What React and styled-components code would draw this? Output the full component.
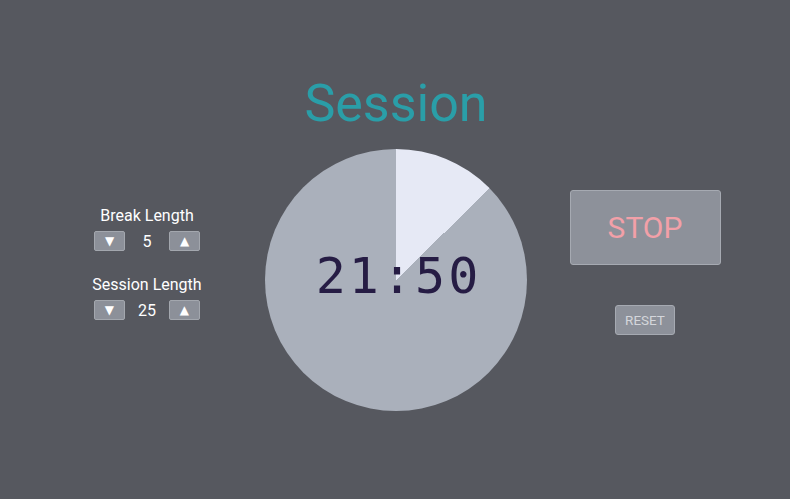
import React from 'react'
import styled, { createGlobalStyle } from 'styled-components'

const GlobalStyle = createGlobalStyle`
  body {
    margin: 0;
    background: #56585f;
    font-family: Roboto, "Liberation Sans", sans-serif;
  }
`

const Page = styled.div`
  width: 790px;
  height: 499px;
  display: flex;
  flex-direction: column;
  align-items: center;
  padding-top: 74px;
  box-sizing: border-box;
`

const Title = styled.h1`
  margin: 0;
  font-weight: 400;
  font-size: 52px;
  line-height: 60px;
  color: #2a9ea8;
  margin-left: 2px;
`

const Main = styled.div`
  display: grid;
  grid-template-columns: 236px 262px 236px;
  margin-top: 15px;
  margin-left: 2px;
`

const Controls = styled.div`
  display: flex;
  flex-direction: column;
  align-items: center;
  padding-top: 58px;
  gap: 25px;
`

const Control = styled.div`
  display: flex;
  flex-direction: column;
  align-items: center;
  gap: 6px;
`

const Label = styled.div`
  font-size: 16px;
  line-height: 18px;
  color: #ffffff;
`

const Row = styled.div`
  display: flex;
  align-items: center;
`

const Arrow = styled.button`
  width: 31px;
  height: 20px;
  padding: 0;
  display: flex;
  align-items: center;
  justify-content: center;
  background: #8c9099;
  border: 1px solid #a3a7ae;
  border-radius: 2px;
  color: #ffffff;
  font-family: "DejaVu Sans", sans-serif;
  font-size: 12px;
  line-height: 1;
`

const Value = styled.span`
  width: 44px;
  text-align: center;
  font-size: 16px;
  color: #ffffff;
`

const Pie = styled.div`
  width: 262px;
  height: 262px;
  border-radius: 50%;
  background: conic-gradient(#e6e9f5 0deg ${p => p.$deg}deg, #aab0bb ${p => p.$deg}deg 360deg);
  display: flex;
  align-items: center;
  justify-content: center;
`

const Time = styled.div`
  font-family: "DejaVu Sans Mono", "Liberation Mono", monospace;
  font-size: 50px;
  letter-spacing: 3px;
  color: #261c44;
  margin: -8px 0 0 5px;
`

const Actions = styled.div`
  display: flex;
  flex-direction: column;
  align-items: center;
  padding-top: 41px;
  gap: 40px;
`

const StopButton = styled.button`
  width: 151px;
  height: 75px;
  background: #8d919a;
  border: 1px solid #a6aab2;
  border-radius: 3px;
  color: #f2a0a8;
  font-family: Roboto, "Liberation Sans", sans-serif;
  font-size: 30px;
`

const ResetButton = styled.button`
  width: 60px;
  height: 30px;
  padding: 0;
  background: #8d919a;
  border: 1px solid #a6aab2;
  border-radius: 3px;
  color: #d4d6db;
  font-family: Roboto, "Liberation Sans", sans-serif;
  font-size: 13.5px;
`

const LengthControl = ({ label, value }) => (
  <Control>
    <Label>{label}</Label>
    <Row>
      <Arrow>▼</Arrow>
      <Value>{value}</Value>
      <Arrow>▲</Arrow>
    </Row>
  </Control>
)

const App = () => {
  const total = 25 * 60
  const left = 21 * 60 + 50
  const deg = ((total - left) / total) * 360

  return (
    <>
      <GlobalStyle />
      <Page>
        <Title>Session</Title>
        <Main>
          <Controls>
            <LengthControl label="Break Length" value={5} />
            <LengthControl label="Session Length" value={25} />
          </Controls>
          <Pie $deg={deg}>
            <Time>21:50</Time>
          </Pie>
          <Actions>
            <StopButton>STOP</StopButton>
            <ResetButton>RESET</ResetButton>
          </Actions>
        </Main>
      </Page>
    </>
  )
}

export default App
